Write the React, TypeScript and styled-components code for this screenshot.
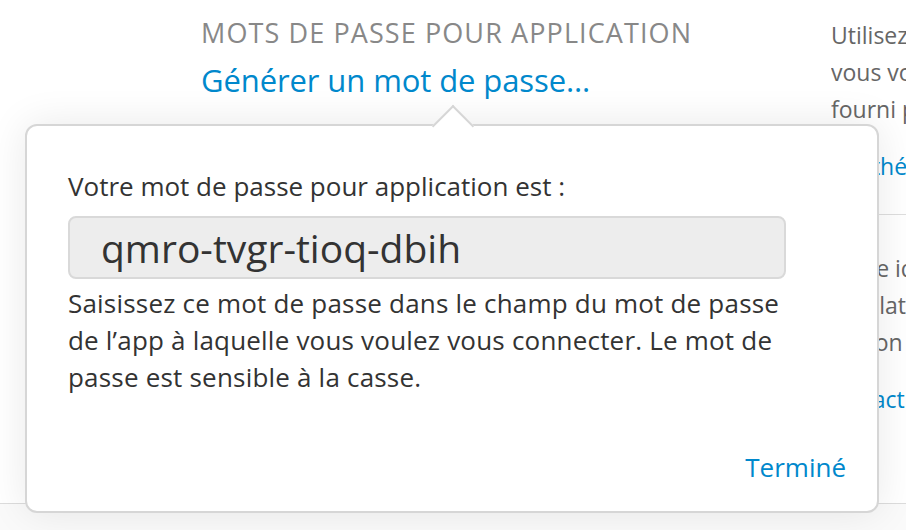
import React from 'react';
import styled, { createGlobalStyle } from 'styled-components';

const GlobalStyle = createGlobalStyle`
  html, body {
    margin: 0;
    padding: 0;
    overflow: hidden;
    background: #fafafa;
  }
  body {
    font-family: "Open Sans", "Noto Sans", sans-serif;
    -webkit-font-smoothing: antialiased;
  }
`;

const Page = styled.div`
  position: relative;
  width: 906px;
  height: 530px;
  overflow: hidden;
  background: #fafafa;
`;

const Section = styled.section`
  display: grid;
  grid-template-columns: 201px 630px 1fr;
  height: 503px;
  background: #fff;
  border-bottom: 1px solid #dcdcdc;
`;

const Main = styled.div`
  grid-column: 2;
  padding-top: 15px;
`;

const Heading = styled.h2`
  margin: 0;
  font-size: 27px;
  font-weight: 400;
  line-height: 36px;
  color: #888;
  letter-spacing: 1.1px;
  white-space: nowrap;
`;

const Link = styled.a`
  display: block;
  margin-top: 9px;
  font-size: 31px;
  line-height: 40px;
  color: #0088cc;
  text-decoration: none;
  letter-spacing: -0.1px;
  white-space: nowrap;
`;

const Aside = styled.div`
  grid-column: 3;
  padding-top: 17px;
  overflow: hidden;
`;

const AsideBlock = styled.div<{ $divider?: boolean }>`
  padding-bottom: ${(p) => (p.$divider ? '29px' : '0')};
  border-bottom: ${(p) => (p.$divider ? '1px solid #dedede' : 'none')};
  margin-bottom: 35px;
`;

const AsideLine = styled.div<{ $link?: boolean }>`
  font-size: 23px;
  line-height: 37px;
  margin-top: ${(p) => (p.$link ? '20px' : '0')};
  color: ${(p) => (p.$link ? '#0088cc' : '#666')};
  white-space: nowrap;
`;

const Popover = styled.div`
  position: absolute;
  left: 25px;
  top: 124px;
  width: 854px;
  height: 389px;
  box-sizing: border-box;
  background: #fff;
  border: 2px solid #d6d6d6;
  border-radius: 12px;
  box-shadow: 0 0 40px rgba(0, 0, 0, 0.09);
  padding: 42px 31px 0 41px;
  display: flex;
  flex-direction: column;
`;

const Arrow = styled.div`
  position: absolute;
  left: 411px;
  top: -15px;
  width: 28px;
  height: 28px;
  background: #fff;
  border-left: 2px solid #d6d6d6;
  border-top: 2px solid #d6d6d6;
  transform: rotate(45deg);
`;

const Label = styled.p`
  margin: 0;
  font-size: 26px;
  line-height: 36px;
  color: #333;
`;

const PasswordBox = styled.div`
  margin-top: 12px;
  width: 718px;
  height: 63px;
  box-sizing: border-box;
  background: #ededed;
  border: 2px solid #d9d9d9;
  border-radius: 8px;
  padding-left: 31px;
  display: flex;
  align-items: center;
  font-size: 39px;
  color: #333;
`;

const Help = styled.p`
  margin: 6px 0 0;
  font-size: 26px;
  line-height: 37px;
  color: #333;
  letter-spacing: 0.2px;
`;

const Footer = styled.div`
  margin-top: auto;
  padding-bottom: 26px;
  display: flex;
  justify-content: flex-end;
`;

const Done = styled.a`
  font-size: 26px;
  line-height: 36px;
  color: #0088cc;
  text-decoration: none;
`;

export default function App() {
  return (
    <Page>
      <GlobalStyle />
      <Section>
        <Main>
          <Heading>MOTS DE PASSE POUR APPLICATION</Heading>
          <Link>Générer un mot de passe...</Link>
        </Main>
        <Aside>
          <AsideBlock $divider>
            <AsideLine>Utilisez des mots de passe</AsideLine>
            <AsideLine>vous voulez utiliser</AsideLine>
            <AsideLine>fourni par Apple.</AsideLine>
            <AsideLine $link>L'esthétique</AsideLine>
          </AsideBlock>
          <AsideBlock>
            <AsideLine>Votre identifiant</AsideLine>
            <AsideLine>Émulation</AsideLine>
            <AsideLine>Raison</AsideLine>
            <AsideLine $link>Impact</AsideLine>
          </AsideBlock>
        </Aside>
      </Section>
      <Popover>
        <Arrow />
        <Label>Votre mot de passe pour application est :</Label>
        <PasswordBox>qmro-tvgr-tioq-dbih</PasswordBox>
        <Help>
          Saisissez ce mot de passe dans le champ du mot de passe
          <br />
          de l’app à laquelle vous voulez vous connecter. Le mot de
          <br />
          passe est sensible à la casse.
        </Help>
        <Footer>
          <Done>Terminé</Done>
        </Footer>
      </Popover>
    </Page>
  );
}
